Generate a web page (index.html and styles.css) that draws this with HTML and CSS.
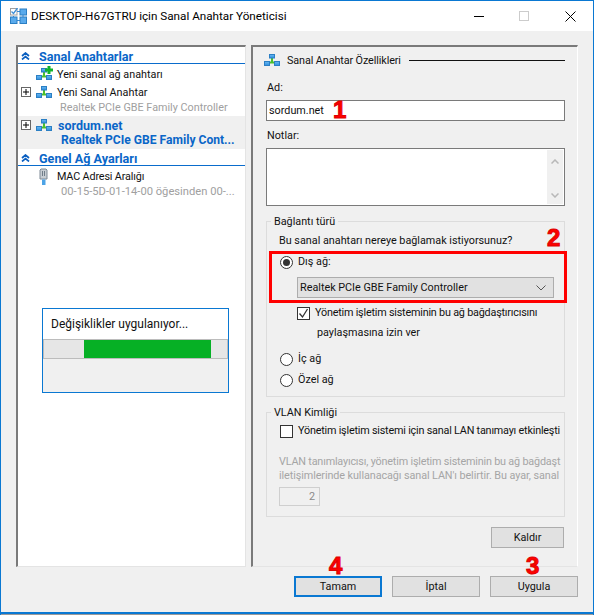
FILE: index.html
```html
<!DOCTYPE html>
<html lang="tr">
<head>
<meta charset="utf-8">
<title>Sanal Anahtar Yöneticisi</title>
<link rel="stylesheet" href="styles.css">
</head>
<body>
<svg class="defs" width="0" height="0" aria-hidden="true">
  <defs>
    <linearGradient id="bl" x1="0" y1="0" x2="0" y2="1"><stop offset="0" stop-color="#6ab8f0"/><stop offset="1" stop-color="#2f8fe0"/></linearGradient>
    <symbol id="net" viewBox="0 0 16 12">
      <path d="M8 4v4.500M3 8.500h10" stroke="#4cc02c" stroke-width="2" fill="none"/>
      <rect x="5.500" y=".5" width="5" height="3.500" fill="url(#bl)" stroke="#2b7fc4"/>
      <rect x=".5" y="7.500" width="5" height="4" fill="url(#bl)" stroke="#2b7fc4"/>
      <rect x="10.500" y="7.500" width="5" height="4" fill="url(#bl)" stroke="#2b7fc4"/>
    </symbol>
    <symbol id="chev" viewBox="0 0 9 8">
      <path d="M1 4l3.500-3L8 4M1 7.500l3.500-3 3.500 3" stroke="#0a5fc0" stroke-width="1.700" fill="none"/>
    </symbol>
  </defs>
</svg>
<div class="window">
  <header class="titlebar">
    <svg class="app-icon" width="17" height="16" viewBox="0 0 17 16">
      <rect x=".5" y=".5" width="6.500" height="6.500" fill="#fff" stroke="#a0a0a0"/>
      <path d="M1.500 3.500l2 2L7.500 0" stroke="#3f8fd8" stroke-width="1.300" fill="none"/>
      <path d="M7 3.500h3M13 7v2M7 12.500h3M3.500 8v1" stroke="#3a8ad4" fill="none"/>
      <rect x="10" y="1" width="6.500" height="6" fill="#59aaec" stroke="#2b7fc4"/>
      <rect x=".5" y="9" width="6.500" height="6.500" fill="#59aaec" stroke="#2b7fc4"/>
      <rect x="10" y="9" width="6.500" height="6.500" fill="#59aaec" stroke="#2b7fc4"/>
    </svg>
    <span class="title">DESKTOP-H67GTRU için Sanal Anahtar Yöneticisi</span>
    <div class="controls">
      <svg width="10" height="1" viewBox="0 0 10 1"><path d="M0 .5h10" stroke="#000"/></svg>
      <svg width="10" height="10" viewBox="0 0 10 10"><rect x=".5" y=".5" width="9" height="9" fill="none" stroke="#ccc"/></svg>
      <svg width="11" height="11" viewBox="0 0 11 11"><path d="M.5.5l10 10M10.500.5l-10 10" stroke="#000" fill="none"/></svg>
    </div>
  </header>

  <main class="content">
    <div class="panes">
      <nav class="tree">
        <div class="section"><svg class="chev" width="9" height="8"><use href="#chev"/></svg><span>Sanal Anahtarlar</span></div>
        <div class="row row-first">
          <span class="exp-blank"></span>
          <span class="net-wrap"><svg width="16" height="12"><use href="#net"/></svg><svg class="plus" width="8" height="8" viewBox="0 0 8 8"><path d="M4 0v8M0 4h8" stroke="#12b32a" stroke-width="3"/></svg></span>
          <span class="row-label">Yeni sanal ağ anahtarı</span>
        </div>
        <div class="row">
          <span class="exp"><svg width="8" height="8" viewBox="0 0 8 8"><path d="M4 1v6M1 4h6" stroke="#000"/></svg></span>
          <span class="net-wrap"><svg width="16" height="12"><use href="#net"/></svg></span>
          <span class="row-label">Yeni Sanal Anahtar</span>
        </div>
        <div class="sub">Realtek PCIe GBE Family Controller</div>
        <div class="selected">
          <div class="row">
            <span class="exp"><svg width="8" height="8" viewBox="0 0 8 8"><path d="M4 1v6M1 4h6" stroke="#000"/></svg></span>
            <span class="net-wrap"><svg width="16" height="12"><use href="#net"/></svg></span>
            <span class="row-label sel-name">sordum.net</span>
          </div>
          <div class="sub sel-sub">Realtek PCIe GBE Family Cont...</div>
        </div>
        <div class="section"><svg class="chev" width="9" height="8"><use href="#chev"/></svg><span>Genel Ağ Ayarları</span></div>
        <div class="row row-first">
          <span class="exp-blank"></span>
          <span class="net-wrap"><svg class="mac" width="10" height="17" viewBox="0 0 10 17">
            <path d="M2 1h5l1 1v9H1V2z" fill="#c6ccd2" stroke="#7f8a96"/><path d="M3.500 3v5M5.500 3v5" stroke="#6f7c88"/><path d="M3 11.500h3.500V17H3z" fill="#4da3e6"/>
          </svg></span>
          <span class="row-label mac-label">MAC Adresi Aralığı</span>
        </div>
        <div class="sub mac-sub">00-15-5D-01-14-00 öğesinden 00-...</div>
      </nav>

      <section class="props">
        <div class="props-head">
          <svg class="props-icon" width="16" height="12"><use href="#net"/></svg>
          <span class="props-title">Sanal Anahtar Özellikleri</span>
          <span class="props-line"></span>
        </div>
        <label class="field-label label-ad">Ad:</label>
        <div class="textbox">sordum.net</div>
        <label class="field-label label-notes">Notlar:</label>
        <div class="notes">
          <div class="scroll">
            <svg width="8" height="5" viewBox="0 0 8 5"><path d="M.5 4.500L4 1l3.500 3.500" stroke="#b8b8b8" stroke-width="1.500" fill="none"/></svg>
            <svg width="8" height="5" viewBox="0 0 8 5"><path d="M.5.5L4 4 7.500.5" stroke="#b8b8b8" stroke-width="1.500" fill="none"/></svg>
          </div>
        </div>

        <fieldset class="group group-conn">
          <legend>Bağlantı türü</legend>
          <div class="line question">Bu sanal anahtarı nereye bağlamak istiyorsunuz?</div>
          <div class="line opt opt-ext"><span class="radio on"></span>Dış ağ:</div>
          <div class="select">Realtek PCIe GBE Family Controller
            <svg width="10" height="6" viewBox="0 0 10 6"><path d="M.5.5L5 5 9.500.5" stroke="#555" fill="none"/></svg>
          </div>
          <div class="line share"><span class="check"><svg width="11" height="11" viewBox="0 0 11 11"><path d="M1.500 5.500l3 3.500 5-8" stroke="#333" stroke-width="1.300" fill="none"/></svg></span>Yönetim işletim sisteminin bu ağ bağdaştırıcısını</div>
          <div class="line share-2">paylaşmasına izin ver</div>
          <div class="line opt opt-int"><span class="radio"></span>İç ağ</div>
          <div class="line opt opt-priv"><span class="radio"></span>Özel ağ</div>
        </fieldset>

        <fieldset class="group group-vlan">
          <legend>VLAN Kimliği</legend>
          <div class="line opt vlan-check"><span class="check"></span><span>Yönetim işletim sistemi için sanal LAN tanımayı etkinleşti</span></div>
          <div class="vlan-text">
            <div class="vlan-l1">VLAN tanımlayıcısı, yönetim işletim sisteminin bu ağ bağdaşt</div>
            <div class="vlan-l2">iletişimlerinde kullanacağı sanal LAN'ı belirtir. Bu ayar, sanal</div>
          </div>
          <div class="spin">2</div>
        </fieldset>

        <button class="btn btn-remove" type="button">Kaldır</button>
      </section>
    </div>

    <footer class="footer">
      <button class="btn btn-main btn-default" type="button">Tamam</button>
      <button class="btn btn-main" type="button">İptal</button>
      <button class="btn btn-main" type="button">Uygula</button>
    </footer>
  </main>

  <div class="progress">
    <div class="progress-top">Değişiklikler uygulanıyor...</div>
    <div class="bar"><div class="bar-fill"></div></div>
  </div>

  <div class="redbox"></div>
  <span class="num n1">1</span>
  <span class="num n2">2</span>
  <span class="num n3">3</span>
  <span class="num n4">4</span>
</div>
</body>
</html>
```
FILE: styles.css
```css
* { box-sizing: border-box; }
html, body { margin: 0; padding: 0; }
body { width: 594px; height: 615px; overflow: hidden; background: #fff; font-family: Roboto, "Noto Sans", sans-serif; font-size: 10.800px; color: #111; }
.defs { position: absolute; }
svg { display: block; }

.window { position: relative; width: 594px; height: 615px; display: flex; flex-direction: column; border: 1px solid #0a78d2; border-bottom: 0; background: #f0f0f0; }

.titlebar { height: 30px; background: #fff; display: flex; align-items: center; padding-left: 9px; flex: none; }
.app-icon { margin-right: 4px; }
.title { font-size: 11.700px; color: #000; }
.controls { margin-left: auto; display: flex; align-items: center; padding-right: 17px; }
.controls svg:nth-child(2) { margin-left: 35px; }
.controls svg:nth-child(3) { margin-left: 36px; }

.content { flex: 1; display: flex; flex-direction: column; border-bottom: 2px solid #0a78d2; box-shadow: 0 1px 0 #9a9a9a; margin-bottom: 1px; }
.panes { display: flex; gap: 5px; margin: 14px 0 0 15px; height: 522px; }

.tree { width: 230px; background: #fff; border-style: solid; border-width: 2px 1px 1px 2px; border-color: #7a7a7a #e4e4e4 #e4e4e4 #7a7a7a; display: flex; flex-direction: column; }
.section { height: 17px; padding-top: 2px; display: flex; align-items: center; border-bottom: 1px solid #0a6ccc; font-weight: 700; font-size: 12.600px; color: #0a66c8; flex: none; }
.chev { margin-left: 3px; }
.section span { margin-left: 9px; }
.row { height: 18px; display: flex; align-items: center; flex: none; }
.row-first { margin-top: 1px; }
.exp, .exp-blank { width: 10px; height: 10px; margin-left: 3px; flex: none; }
.exp { border: 1px solid #666; background: #fff; }
.net-wrap { position: relative; width: 16px; margin-left: 5px; flex: none; display: flex; justify-content: center; }
.plus { position: absolute; right: -1px; top: -2px; }
.row-label { margin-left: 5px; white-space: nowrap; }
.mac-label { letter-spacing: -.15px; }
.sub { height: 15px; line-height: 15px; padding-left: 42px; color: #a0a0a0; white-space: nowrap; flex: none; margin-top: -1px; }
.mac-sub { font-size: 11.200px; padding-left: 43px; }
.selected { background: #f0f0f0; height: 33px; margin-top: 1px; flex: none; }
.sel-name { color: #0a66c8; font-weight: 700; font-size: 12.500px; margin-left: 6px; }
.sel-sub { color: #0a66c8; font-weight: 700; font-size: 12.100px; padding-left: 43px; }

.props { width: 327px; background: #f0f0f0; border-style: solid; border-width: 2px 1px 1px 2px; border-color: #7a7a7a #fff #e4e4e4 #7a7a7a; padding: 0 12px 0 13px; display: flex; flex-direction: column; }
.props-head { height: 26px; display: flex; align-items: center; }
.props-icon { margin-left: -2px; }
.props-title { margin-left: 7px; white-space: nowrap; letter-spacing: -.1px; }
.props-line { flex: 1; height: 1px; background: #111; margin-left: 8px; }
.field-label { height: 16px; line-height: 18px; padding-left: 1px; }
.label-ad { margin-top: 6px; }
.label-notes { margin-top: 6px; }
.textbox { height: 21px; margin-top: 5px; background: #fff; border: 1px solid #7a7a7a; line-height: 19px; padding-left: 2px; }
.notes { height: 58px; margin-top: 5px; background: #fff; border: 1px solid #7a7a7a; display: flex; justify-content: flex-end; padding: 1px; }
.scroll { width: 16px; background: #f0f0f0; display: flex; flex-direction: column; justify-content: space-between; align-items: center; padding: 9px 0 6px; }

.group { margin: 0; padding: 0 0 0 12px; border: 1px solid #dcdcdc; min-width: 0; display: block; }
.group legend { padding: 0 3px; margin-left: -8px; height: 16px; line-height: 18px; }
.group-conn { margin-top: 7px; height: 184px; }
.group-vlan { margin-top: 7px; height: 113px; }
.line { height: 16px; line-height: 16px; white-space: nowrap; }
.question { margin-top: 3px; line-height: 18px; }
.opt { display: flex; align-items: center; }
.opt-ext { margin-top: 6px; }
.opt-int { margin-top: 10px; }
.opt-priv { margin-top: 5px; }
.radio { width: 13px; height: 13px; border: 1px solid #333; border-radius: 50%; background: #fff; margin: 0 5px 0 1px; flex: none; position: relative; }
.radio.on::after { content: ""; position: absolute; left: 2px; top: 2px; width: 7px; height: 7px; border-radius: 50%; background: #333; }
.select { width: 257px; height: 21px; margin: 7px 0 0 18px; background: #e1e1e1; border: 1px solid #adadad; line-height: 19px; padding: 0 7px 0 2px; display: flex; justify-content: space-between; align-items: center; }
.share { margin: 7px 0 0 18px; display: flex; align-items: center; letter-spacing: -.2px; }
.check { width: 13px; height: 13px; border: 1px solid #333; background: #fff; margin-right: 5px; flex: none; display: block; }
.share-2 { margin: 4px 0 0 38px; }
.vlan-check { margin-top: 3px; padding-left: 1px; letter-spacing: -.2px; }
.vlan-text { margin-top: 16px; color: #a5a5a5; line-height: 14px; white-space: nowrap; }
.vlan-l1 { letter-spacing: -.18px; }
.vlan-l2 { letter-spacing: -.08px; }
.spin { width: 41px; height: 19px; margin-top: 4px; border: 1px solid #cfcfcf; background: #f0f0f0; color: #8a8a8a; text-align: right; padding-right: 4px; line-height: 17px; }

.btn { display: block; padding: 0; font: inherit; color: #111; background: #e1e1e1; border: 1px solid #adadad; height: 21px; flex: none; }
.btn-remove { width: 73px; margin: 10px 0 0 auto; position: relative; left: -1px; }
.footer { display: flex; justify-content: flex-end; gap: 10px; margin: 9px 15px 0 0; }
.btn-main { width: 88px; }
.btn-default { border: 2px solid #0a78d2; }

.progress { position: absolute; left: 41px; top: 307px; width: 187px; height: 85px; border: 1px solid #0a78d2; background: #f0f0f0; }
.progress-top { height: 30px; background: #fff; line-height: 30px; padding-left: 8px; font-size: 12px; }
.bar { height: 20px; background: #e6e6e6; border: 1px solid #bcbcbc; padding-left: 40px; }
.bar-fill { width: 127px; height: 18px; background: #06b025; }

.redbox { position: absolute; left: 268px; top: 250px; width: 298px; height: 52px; border: 3px solid #f00; pointer-events: none; }
.num { position: absolute; font-family: "Liberation Sans", sans-serif; font-weight: 700; font-size: 24px; line-height: 24px; color: #f00; -webkit-text-stroke: 1px #e00000; }
.n1 { left: 332px; top: 97px; }
.n2 { left: 546px; top: 225px; }
.n3 { left: 525px; top: 553px; }
.n4 { left: 328px; top: 553px; }
```
